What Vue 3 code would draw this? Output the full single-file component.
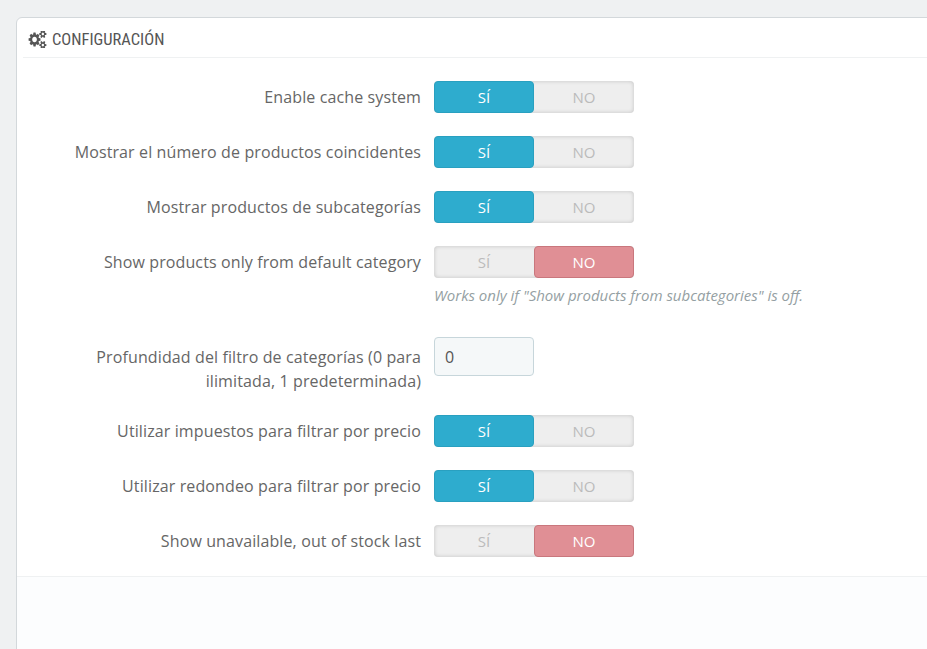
<script setup>
// rows of the configuration form
const rows = [
  { label: "Enable cache system", value: true },
  { label: "Mostrar el número de productos coincidentes", value: true },
  { label: "Mostrar productos de subcategorías", value: true },
  {
    label: "Show products only from default category",
    value: false,
    help: 'Works only if "Show products from subcategories" is off.',
  },
  {
    label: "Profundidad del filtro de categorías (0 para ilimitada, 1 predeterminada)",
    input: "0",
  },
  { label: "Utilizar impuestos para filtrar por precio", value: true },
  { label: "Utilizar redondeo para filtrar por precio", value: true },
  { label: "Show unavailable, out of stock last", value: false },
];
</script>

<template>
  <div class="page">
    <div class="panel">
      <div class="panel-heading">
        <svg class="cogs" viewBox="0 110 2048 1572" preserveAspectRatio="none" aria-hidden="true">
          <path d="M960 896q0-106-75-181t-181-75-181 75-75 181 75 181 181 75 181-75 75-181zm768 512q0-52-38-90t-90-38-90 38-38 90q0 53 37.5 90.5t90.5 37.5 90.5-37.5 37.5-90.5zm0-1024q0-52-38-90t-90-38-90 38-38 90q0 53 37.5 90.5t90.5 37.5 90.5-37.5 37.5-90.5zm-384 421v185q0 10-7 19.5t-16 10.5l-155 24q-11 35-32 76 34 48 90 115 7 11 7 20 0 12-7 19-23 30-82.5 89.5t-78.5 59.5q-11 0-21-7l-115-90q-37 19-77 31-11 108-23 155-7 24-30 24h-186q-11 0-20-7.5t-10-17.5l-23-153q-34-10-75-31l-118 89q-7 7-20 7-11 0-21-8-144-133-144-160 0-9 7-19 10-14 41-53t47-61q-23-44-35-82l-152-24q-10-1-17-9.5t-7-19.5v-185q0-10 7-19.5t16-10.5l155-24q11-35 32-76-34-48-90-115-7-11-7-20 0-12 7-20 22-30 82-89t79-59q11 0 21 7l115 90q34-18 77-32 11-108 23-154 7-24 30-24h186q11 0 20 7.5t10 17.5l23 153q34 10 75 31l118-89q8-7 20-7 11 0 21 8 144 133 144 160 0 8-7 19-12 16-42 54t-45 60q23 48 34 82l152 23q10 2 17 10.5t7 19.5zm640 533v140q0 16-149 31-12 27-30 52 51 113 51 138 0 4-4 7-122 71-124 71-8 0-46-47t-52-68q-20 2-30 2t-30-2q-14 21-52 68t-46 47q-2 0-124-71-4-3-4-7 0-25 51-138-18-25-30-52-149-15-149-31v-140q0-16 149-31 13-29 30-52-51-113-51-138 0-4 4-7 4-2 35-20t59-34 30-16q8 0 46 46.5t52 67.5q20-2 30-2t30 2q51-71 92-112l6-2q4 0 124 70 4 3 4 7 0 25-51 138 17 23 30 52 149 15 149 31zm0-1024v140q0 16-149 31-12 27-30 52 51 113 51 138 0 4-4 7-122 71-124 71-8 0-46-47t-52-68q-20 2-30 2t-30-2q-14 21-52 68t-46 47q-2 0-124-71-4-3-4-7 0-25 51-138-18-25-30-52-149-15-149-31v-140q0-16 149-31 13-29 30-52-51-113-51-138 0-4 4-7 4-2 35-20t59-34 30-16q8 0 46 46.5t52 67.5q20-2 30-2t30 2q51-71 92-112l6-2q4 0 124 70 4 3 4 7 0 25-51 138 17 23 30 52 149 15 149 31z" />
        </svg>
        <span class="title">CONFIGURACIÓN</span>
      </div>

      <div class="form">
        <div v-for="row in rows" :key="row.label" class="row" :class="{ tall: row.input }">
          <label class="label">{{ row.label }}</label>
          <div class="field">
            <input v-if="row.input" class="text-input" :value="row.input" />
            <div v-else class="switch">
              <span class="opt" :class="{ yes: row.value }">SÍ</span>
              <span class="opt" :class="{ no: !row.value }">NO</span>
            </div>
            <p v-if="row.help" class="help">{{ row.help }}</p>
          </div>
        </div>
      </div>

      <div class="panel-footer"></div>
    </div>
  </div>
</template>

<style>
html,
body {
  margin: 0;
  height: 100%;
  overflow: hidden;
  background: #eff1f2;
}
</style>

<style scoped>
.page {
  height: 649px;
  overflow: hidden;
  padding: 17px 0 0 16px;
  box-sizing: border-box;
  font-family: "Open Sans", sans-serif;
  font-size: 15px;
  color: #6c868e;
}
.panel {
  width: 960px;
  height: 700px;
  box-sizing: border-box;
  background: #fff;
  border: 1px solid #d3d8db;
  border-radius: 6px;
  display: flex;
  flex-direction: column;
}
.panel-heading {
  height: 39px;
  margin-left: 6px;
  padding-left: 5px;
  border-bottom: 1px solid #eff1f2;
  display: flex;
  align-items: center;
  gap: 5px;
  box-sizing: content-box;
}
.cogs {
  width: 19px;
  height: 17px;
  fill: #555;
  margin-top: 3px;
}
.title {
  font-family: "Liberation Sans Narrow", "Roboto Condensed", Roboto, sans-serif;
  font-size: 16.5px;
  color: #555;
  margin-top: 3px;
}
.form {
  padding-top: 23px;
  height: 495px;
  box-sizing: content-box;
}
.row {
  display: flex;
  margin-bottom: 23px;
}
.row:has(.help) {
  margin-bottom: 32px;
}
.row.tall {
  margin-bottom: 22px;
}
.label {
  width: 417px;
  padding: 4px 13px 0 30px;
  box-sizing: border-box;
  text-align: right;
  font-size: 16px;
  letter-spacing: 0.115px;
  line-height: 24px;
  color: #666;
}
.row.tall .label {
  padding-top: 8px;
}
.field {
  width: 500px;
}
.switch {
  width: 200px;
  height: 32px;
  display: flex;
  border-radius: 4px;
  background: #eee;
  box-shadow: inset 0 0 4px rgba(0, 0, 0, 0.18);
}
.opt {
  width: 100px;
  height: 32px;
  text-align: center;
  color: #bbb;
  box-sizing: border-box;
  line-height: 32px;
}
.opt.yes,
.opt.no {
  color: #fff;
  border-radius: 4px;
  border: 1px solid;
  line-height: 30px;
}
.opt.yes {
  background: #2eacce;
  border-color: #29a0c0;
}
.opt.no {
  background: #e08f95;
  border-color: #c9777d;
}
.help {
  margin: 7px 0 0;
  font-style: italic;
  font-size: 15px;
  line-height: 20px;
  color: #959fa3;
  white-space: nowrap;
}
.text-input {
  display: block;
  width: 100px;
  height: 39px;
  box-sizing: border-box;
  padding: 0 10px;
  border: 1px solid #c7d6db;
  border-radius: 4px;
  background: #f5f8f9;
  font: inherit;
  font-size: 16px;
  color: #555;
  outline: none;
}
.panel-footer {
  flex: 1;
  background: #fcfdfe;
  border-top: 1px solid #eff1f2;
}
</style>
